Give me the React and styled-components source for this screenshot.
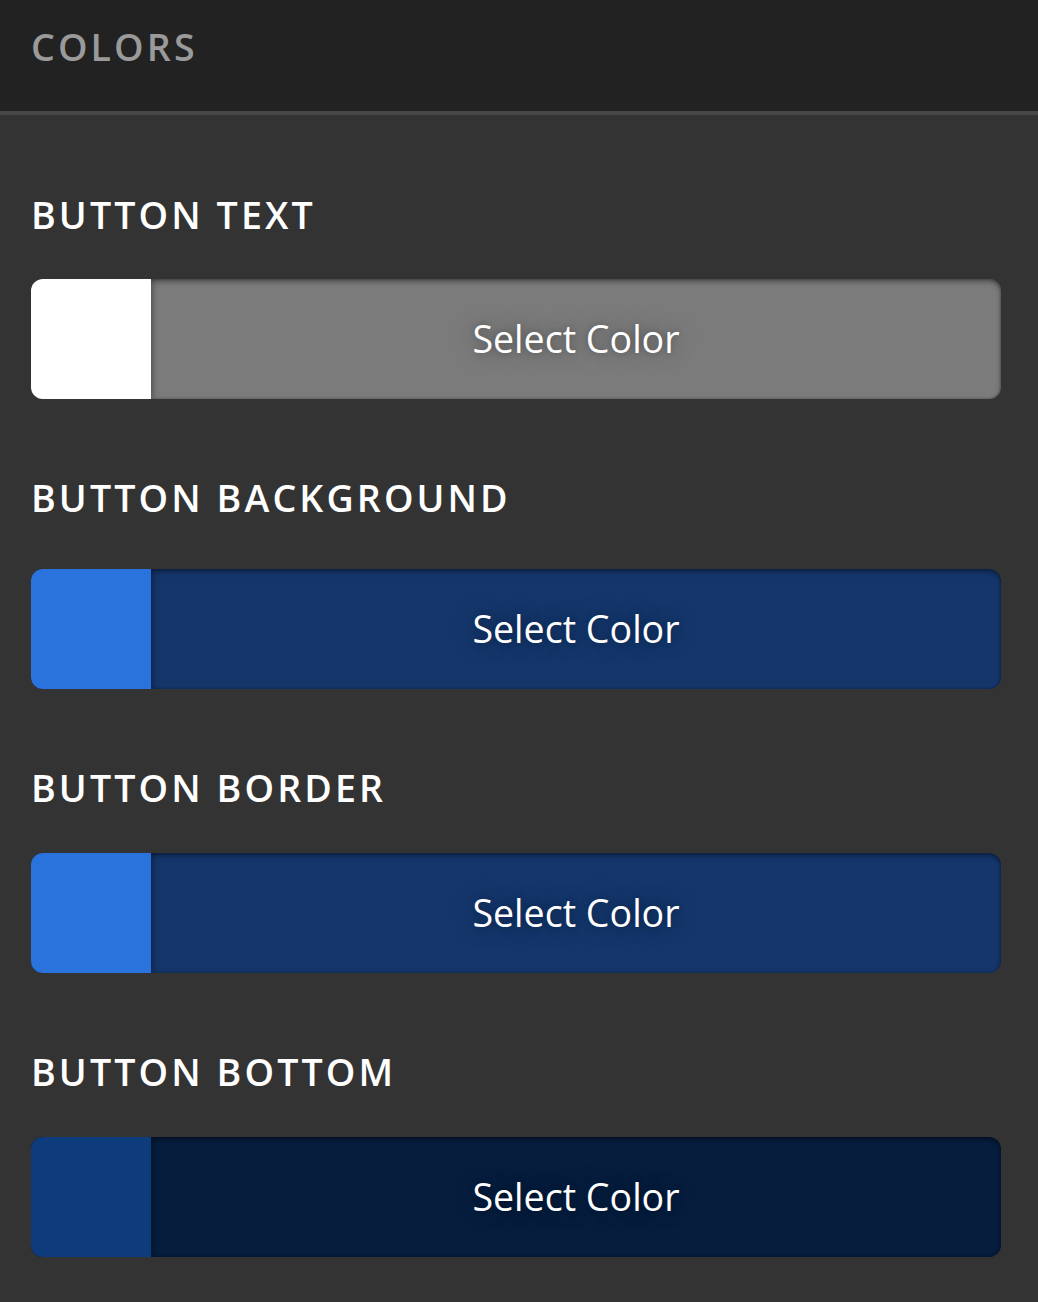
import React from "react";
import styled, { createGlobalStyle } from "styled-components";

const Global = createGlobalStyle`
  html, body { margin: 0; padding: 0; background: #333333; }
  body { font-family: "Open Sans", "Noto Sans", "DejaVu Sans", sans-serif; }
  * { box-sizing: border-box; }
`;

const Page = styled.div`
  width: 1038px;
  min-height: 1302px;
  background: #333333;
`;

const Header = styled.header`
  height: 115px;
  padding: 27px 31px 0;
  background: #222222;
  border-bottom: 4px solid #474747;
`;

const Title = styled.h1`
  margin: 0;
  font-size: 37.6px;
  line-height: 40px;
  font-weight: 600;
  letter-spacing: 3.1px;
  color: #9a9a9a;
`;

const Body = styled.main`
  display: flex;
  flex-direction: column;
  gap: 79px;
  padding: 80px 31px 40px;
`;

const Section = styled.section`
  display: flex;
  flex-direction: column;
  gap: ${(p) => p.$gap}px;
`;

const Label = styled.h2`
  margin: 0;
  font-size: 37.6px;
  line-height: 40px;
  font-weight: 600;
  letter-spacing: 3.1px;
  color: #ffffff;
`;

const Picker = styled.div`
  position: relative;
  display: flex;
  width: 970px;
  height: 120px;
  border-radius: 12px;
  overflow: hidden;
  background: ${(p) => p.$dark};

  &::after {
    content: "";
    position: absolute;
    inset: 0;
    border-radius: 12px;
    pointer-events: none;
    box-shadow: inset 0 3px 5px rgba(0, 0, 0, 0.35), inset 0 0 3px rgba(0, 0, 0, 0.35);
  }
`;

const Swatch = styled.div`
  position: relative;
  z-index: 1;
  flex: 0 0 120px;
  background: ${(p) => p.$color};
  box-shadow: 2px 0 6px rgba(0, 0, 0, 0.35);
`;

const SelectButton = styled.button`
  flex: 1;
  display: flex;
  align-items: center;
  justify-content: center;
  border: none;
  background: transparent;
  padding: 0 0 2px;
  font-family: "Open Sans", "Noto Sans", sans-serif;
  font-size: 37.6px;
  font-weight: 400;
  color: #ffffff;
  text-shadow: 0 0 22px rgba(0, 0, 0, 0.35), 0 0 6px rgba(0, 0, 0, 0.2);
  cursor: pointer;
`;

const items = [
  { label: "BUTTON TEXT", color: "#ffffff", dark: "#7b7b7b", gap: 44 },
  { label: "BUTTON BACKGROUND", color: "#2a73dc", dark: "#14366b", gap: 51 },
  { label: "BUTTON BORDER", color: "#2a73dc", dark: "#14366b", gap: 45 },
  { label: "BUTTON BOTTOM", color: "#0e3b7c", dark: "#061d3e", gap: 45 },
];

export default function App() {
  return (
    <Page>
      <Global />
      <Header>
        <Title>COLORS</Title>
      </Header>
      <Body>
        {items.map((it) => (
          <Section key={it.label} $gap={it.gap}>
            <Label>{it.label}</Label>
            <Picker $dark={it.dark}>
              <Swatch $color={it.color} />
              <SelectButton>Select Color</SelectButton>
            </Picker>
          </Section>
        ))}
      </Body>
    </Page>
  );
}
